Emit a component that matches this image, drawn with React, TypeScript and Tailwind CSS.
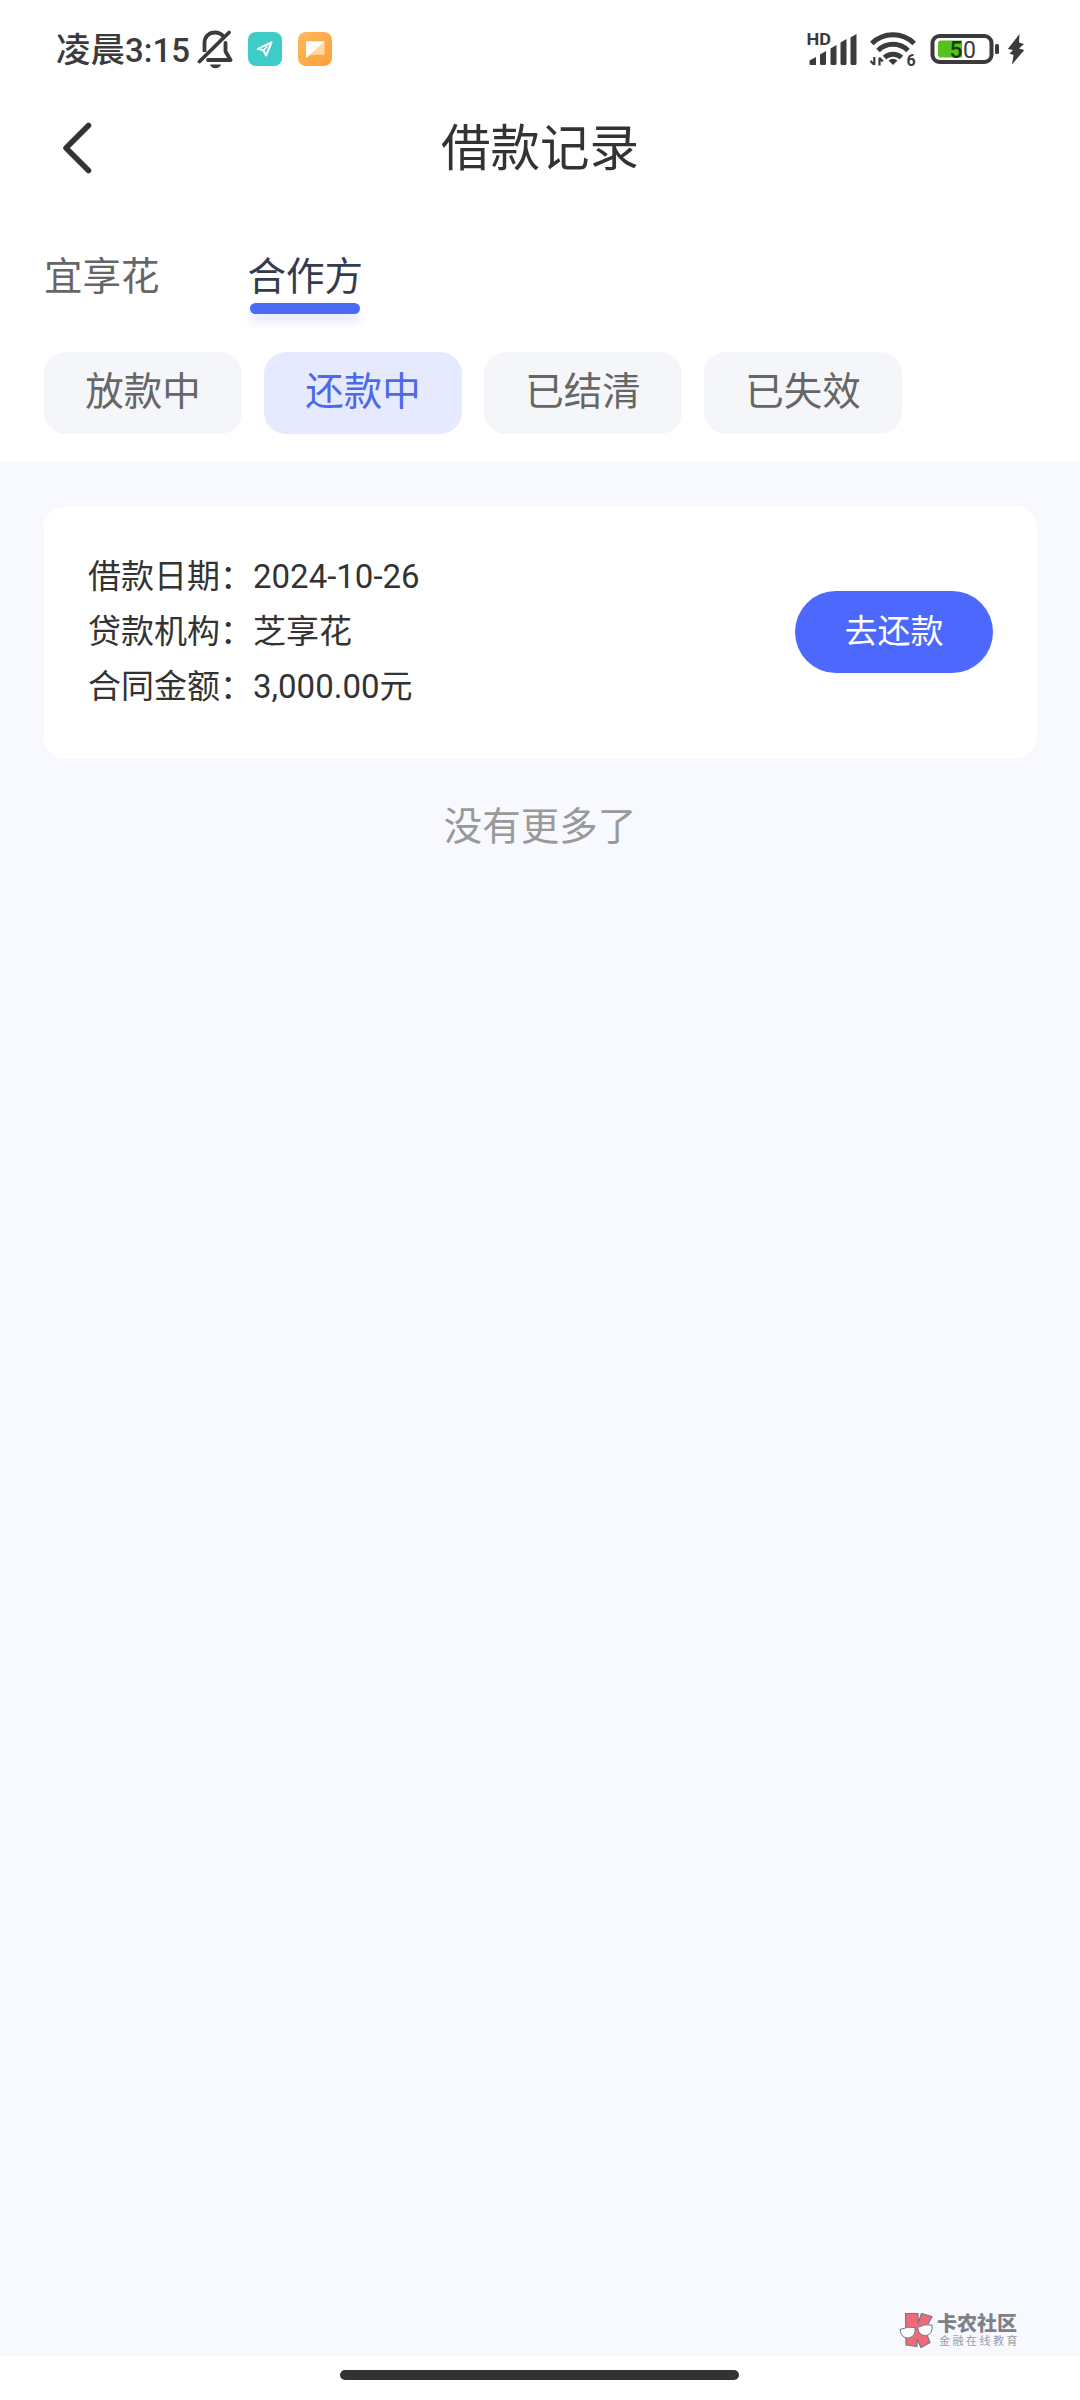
const TABS = ["宜享花", "合作方"];
const FILTERS = ["放款中", "还款中", "已结清", "已失效"];

const RECORD = [
  { label: "借款日期：", value: "2024-10-26" },
  { label: "贷款机构：", value: "芝享花" },
  { label: "合同金额：", value: "3,000.00元" },
];

function BellOff() {
  return (
    <svg width="36" height="40" viewBox="197 29 36 40" fill="none" stroke="#3b3b3b" strokeWidth="3.8">
      <path d="M204.500 52V43c0-6.500 4.500-10.500 10.500-10.500 3.500 0 6.500 1.500 8.300 3.800" />
      <path d="M225.500 43v8.500l5 8.500H208" strokeLinejoin="round" strokeLinecap="round" />
      <path d="M199.500 61.500L229 32.500" strokeLinecap="round" />
      <path d="M210 64.500h11c-.8 2.500-2.800 3.800-5.500 3.800s-4.700-1.300-5.500-3.800z" fill="#3b3b3b" stroke="none" />
    </svg>
  );
}

function NavApp() {
  return (
    <svg width="34" height="34" viewBox="0 0 34 34">
      <rect width="34" height="34" rx="8" fill="#3fcbc8" />
      <path d="M23.500 10.300L9.800 16.800l5.600 1.500 2.700 5.200z" fill="none" stroke="#fff" strokeWidth="2" strokeLinejoin="round" />
      <path d="M15.400 18.300l4-4" stroke="#fff" strokeWidth="1.500" />
    </svg>
  );
}

function NoteApp() {
  return (
    <svg width="34" height="34" viewBox="0 0 34 34">
      <defs>
        <linearGradient id="note" x1="0" y1="0" x2="1" y2="1">
          <stop offset="0" stopColor="#ffb95c" />
          <stop offset="1" stopColor="#f9a03a" />
        </linearGradient>
      </defs>
      <rect width="34" height="34" rx="8" fill="url(#note)" />
      <path d="M8 9.500h18.500v13.200H13l-5 3.300z" fill="#ffd9a3" />
      <path d="M8 9.500h18.500L8 26z" fill="#fff" />
    </svg>
  );
}

function Signal() {
  return (
    <svg width="52" height="36" viewBox="806 31 52 36" fill="#3b3b3b">
      <text
        x="806.500"
        y="45"
        fontSize="16"
        fontWeight="700"
        fontFamily="Roboto, sans-serif"
        textLength="24.500"
        lengthAdjust="spacingAndGlyphs"
      >
        HD
      </text>
      <path d="M809.500 60.500l6.500-3.500v8h-5.500a1 1 0 0 1-1-1z" />
      <path d="M820 54.500l6-3.500v12.500a1.500 1.500 0 0 1-1.500 1.500H821.500a1.500 1.500 0 0 1-1.500-1.500z" />
      <path d="M830.500 48.500l6-3.500v18.500a1.500 1.500 0 0 1-1.500 1.500H832a1.500 1.500 0 0 1-1.500-1.500z" />
      <path d="M840.500 42.500l6-3.500v24.500a1.500 1.500 0 0 1-1.500 1.500H842a1.500 1.500 0 0 1-1.500-1.500z" />
      <path d="M850.500 37.500l6-3.500v29.500a1.500 1.500 0 0 1-1.500 1.500H852a1.500 1.500 0 0 1-1.500-1.500z" />
    </svg>
  );
}

function Wifi() {
  return (
    <svg width="50" height="38" viewBox="868 31 50 38" fill="none" stroke="#3b3b3b">
      <g strokeWidth="5">
        <path d="M871.800 44.500a30 30 0 0 1 42.400 0" />
        <path d="M878 51.500a21 21 0 0 1 30 0" />
        <path d="M884.500 58.500a12.500 12.500 0 0 1 17 0" />
      </g>
      <path d="M888.500 61.500q4.500-3.500 9 0l-4.500 4.500z" fill="#3b3b3b" stroke="none" />
      <path d="M874.300 58v8M870.500 62l3.800 3.800M879.500 66.500v-8M879.500 59l3.300 3.500" strokeWidth="2.200" />
      <text x="906.500" y="66.500" fontSize="16" fontWeight="700" fontFamily="Roboto, sans-serif" fill="#3b3b3b" stroke="none">
        6
      </text>
    </svg>
  );
}

function Battery() {
  return (
    <svg width="70" height="32" viewBox="930 33 70 32">
      <rect x="932.500" y="36" width="59" height="26" rx="7" fill="#fff" stroke="#3b3b3b" strokeWidth="4" />
      <path d="M962 40.500v17h-21a3 3 0 0 1-3-3v-11a3 3 0 0 1 3-3z" fill="#55c01e" />
      <rect x="995" y="44" width="4" height="10" rx="1.500" fill="#3b3b3b" />
      <text x="949.500" y="57.500" fontSize="23" fontWeight="500" fontFamily="Roboto, sans-serif" fill="#143d0c">
        5
      </text>
      <text x="963" y="57.500" fontSize="23" fontWeight="400" fontFamily="Roboto, sans-serif" fill="#3b3b3b">
        0
      </text>
    </svg>
  );
}

function Bolt() {
  return (
    <svg width="18" height="32" viewBox="0 0 18 32" fill="#3b3b3b">
      <path d="M12.500 1L.8 16l5.200 1-3.500 3.500 4 1.500L5 31.500 17.300 17l-5.300-1.500 5-4.500-5-1.500z" />
    </svg>
  );
}

function StatusBar() {
  return (
    <div className="flex h-[98px] items-center pl-[56px] pr-[55px]">
      <div className="flex w-[141px] items-center whitespace-nowrap pt-[2px] font-medium leading-none text-[#3b3b3b]">
        <span className="text-[34.500px]">凌晨</span>
        <span className="text-[33px]">3:15</span>
      </div>
      <BellOff />
      <div className="ml-[15px] flex gap-4">
        <NavApp />
        <NoteApp />
      </div>
      <div className="ml-auto flex items-center">
        <Signal />
        <div className="ml-2.5">
          <Wifi />
        </div>
        <div className="ml-3">
          <Battery />
        </div>
        <div className="ml-[7px]">
          <Bolt />
        </div>
      </div>
    </div>
  );
}

function Watermark() {
  return (
    <div className="mb-[7px] mr-[63px] mt-auto flex gap-[3px] self-end">
      <svg width="35" height="37" viewBox="0 0 35 37">
        <g fill="#ee6b79" stroke="#77787f" strokeWidth="1.200" strokeLinejoin="round">
          <path d="M6.500 1.500h12.500V11l3.500-9.500 10.500 3-7 13.500L31 30.500l-9 5-4-8.500v7.500L7 33z" />
        </g>
        <g fill="#fbfcff" stroke="#77787f" strokeWidth="1">
          <path d="M1 17.500q8-3.500 15-2 1 9-6.500 10.500Q2 26.500 1 17.500z" />
          <path d="M18.500 15.500q7-4 14.500-2.500 1 9-5.500 10.500-7.500 1-9-8z" />
        </g>
      </svg>
      <div className="w-[80px] whitespace-nowrap pt-[1px] text-[#808188]">
        <p className="text-[20px] font-black leading-[22px]">卡农社区</p>
        <p className="pl-[2px] text-[11px] leading-[13px] tracking-[2.500px] text-[#9b9ca4]">金融在线教育</p>
      </div>
    </div>
  );
}

export default function App() {
  const activeTab = "合作方";
  const activeFilter = "还款中";

  return (
    <div className="flex h-[2400px] w-[1080px] flex-col bg-white font-[Roboto,'Noto_Sans_CJK_SC',sans-serif] text-[#333]">
      <StatusBar />

      <header className="grid h-[101px] grid-cols-[1fr_auto_1fr] items-center px-[60px]">
        <button aria-label="返回" className="w-9 pb-[2px]">
          <svg width="36" height="56" viewBox="60 120 36 56" fill="none" stroke="#333" strokeWidth="5.500" strokeLinecap="round" strokeLinejoin="round">
            <path d="M88.500 125.500L66 148l22.500 22.500" />
          </svg>
        </button>
        <h1 className="pt-[2px] text-[49.500px] leading-none">借款记录</h1>
      </header>

      <nav className="mt-[50px] flex gap-[88px] px-[44px] text-[38.500px]">
        {TABS.map((tab) => (
          <div key={tab} className="flex flex-col items-center">
            <span className={`h-[54px] leading-[55px] ${tab === activeTab ? "text-[#333b4f]" : "text-[#666]"}`}>{tab}</span>
            {tab === activeTab && (
              <span className="h-[11px] w-[110px] rounded-full bg-[#4d69f8] shadow-[0_8px_10px_rgba(77,90,248,0.14)]" />
            )}
          </div>
        ))}
      </nav>

      <div className="mt-[38px] flex gap-[22px] px-[44px] text-[38.500px]">
        {FILTERS.map((f) => (
          <button
            key={f}
            className={`h-[82px] w-[198px] rounded-[22px] pb-[2px] leading-none ${
              f === activeFilter ? "bg-[#e5eaff] text-[#4d69e8]" : "bg-[#f5f6fa] text-[#666]"
            }`}
          >
            {f}
          </button>
        ))}
      </div>

      <main className="mt-7 flex h-[1894px] flex-col bg-[#f7f9ff] pt-[44px]">
        <section className="ml-[44px] mr-[43px] flex h-[253px] items-center justify-between rounded-[22px] bg-white px-[44px] pb-[2px]">
          <dl className="text-[33px] leading-[55px]">
            {RECORD.map((r) => (
              <div key={r.label} className="flex">
                <dt>{r.label}</dt>
                <dd>{r.value}</dd>
              </div>
            ))}
          </dl>
          <button className="h-[82px] w-[198px] rounded-full bg-[#4d69fd] text-[33px] leading-none text-white">
            去还款
          </button>
        </section>

        <p className="mt-[40px] text-center text-[38.500px] leading-[55px] text-[#999]">没有更多了</p>

        <Watermark />
      </main>

      <div className="ml-[340px] mt-[14px] h-[10px] w-[399px] rounded-full bg-[#333]" />
    </div>
  );
}
